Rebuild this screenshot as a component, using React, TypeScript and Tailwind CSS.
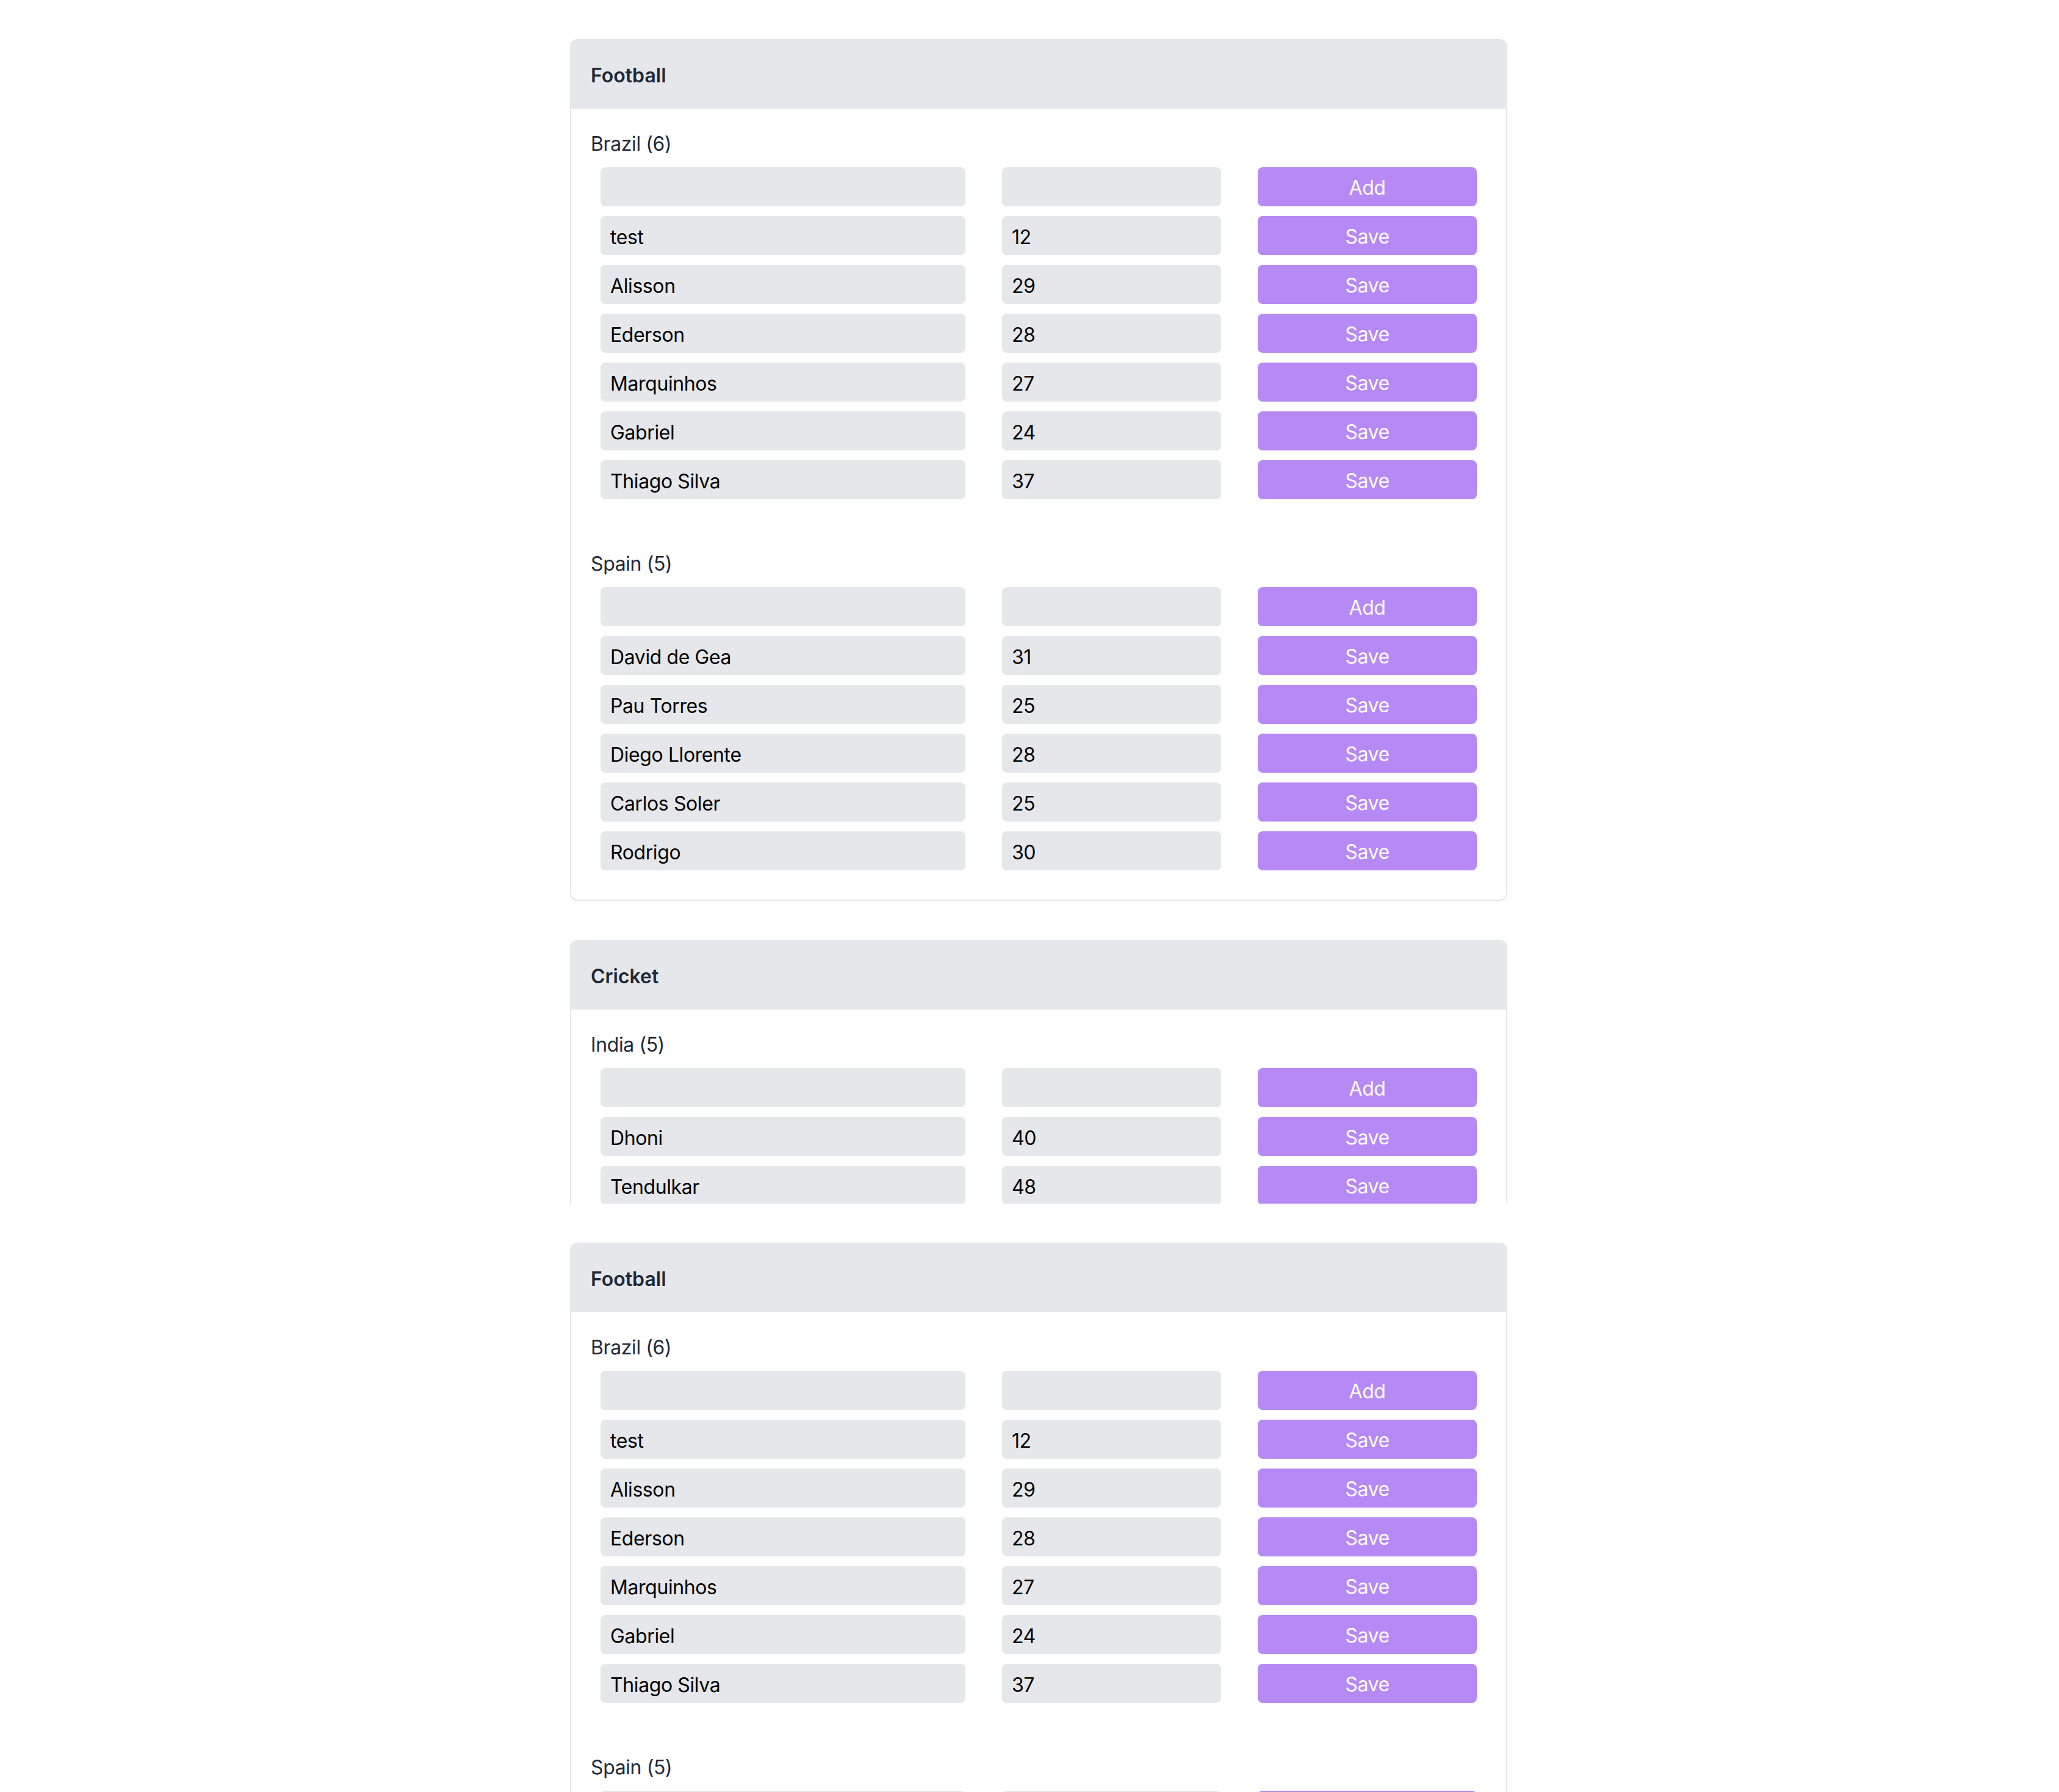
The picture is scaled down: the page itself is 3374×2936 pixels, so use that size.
import React from "react";

type Player = { name: string; age: number };
type Group = { country: string; count: number; players: Player[] };
type Sport = { sport: string; groups: Group[] };

const football: Sport = {
  sport: "Football",
  groups: [
    {
      country: "Brazil",
      count: 6,
      players: [
        { name: "test", age: 12 },
        { name: "Alisson", age: 29 },
        { name: "Ederson", age: 28 },
        { name: "Marquinhos", age: 27 },
        { name: "Gabriel", age: 24 },
        { name: "Thiago Silva", age: 37 },
      ],
    },
    {
      country: "Spain",
      count: 5,
      players: [
        { name: "David de Gea", age: 31 },
        { name: "Pau Torres", age: 25 },
        { name: "Diego Llorente", age: 28 },
        { name: "Carlos Soler", age: 25 },
        { name: "Rodrigo", age: 30 },
      ],
    },
  ],
};

const cricket: Sport = {
  sport: "Cricket",
  groups: [
    {
      country: "India",
      count: 5,
      players: [
        { name: "Dhoni", age: 40 },
        { name: "Tendulkar", age: 48 },
      ],
    },
  ],
};

function Row({ name, age, label }: { name: string; age: string; label: string }) {
  return (
    <div className="flex gap-[60px]">
      <input
        readOnly
        value={name}
        className="w-[598px] h-[64px] rounded-[8px] bg-[#e5e7eb] px-[16px] pt-[4px] text-[32px] tracking-[-0.4px] text-black outline-none"
      />
      <input
        readOnly
        value={age}
        className="w-[359px] h-[64px] rounded-[8px] bg-[#e5e7eb] px-[16px] pt-[4px] text-[32px] tracking-[-0.4px] text-black outline-none"
      />
      <button className="w-[359px] h-[64px] rounded-[8px] bg-[#b789f4] pt-[4px] text-white text-[32px] leading-[48px] tracking-[-0.4px]">
        {label}
      </button>
    </div>
  );
}

function Card({ data }: { data: Sport }) {
  return (
    <div className="w-[1536px] rounded-[12px] border-2 border-[#e5e7eb] overflow-hidden bg-white">
      <div className="bg-[#e5e7eb] px-[32px] pt-[34px] pb-[30px] text-[32px] leading-[48px] font-semibold text-[#1f2937]">
        {data.sport}
      </div>
      <div className="p-[32px] flex flex-col gap-[64px]">
        {data.groups.map((g) => (
          <div key={g.country}>
            <div className="pt-[2px] mb-[14px] text-[32px] leading-[48px] tracking-[-0.4px] text-[#1f2937]">
              {g.country} ({g.count})
            </div>
            <div className="flex flex-col gap-[16px] px-[16px] pb-[16px]">
              <Row name="" age="" label="Add" />
              {g.players.map((p) => (
                <Row key={p.name} name={p.name} age={String(p.age)} label="Save" />
              ))}
            </div>
          </div>
        ))}
      </div>
    </div>
  );
}

export default function App() {
  return (
    <div className="h-[2936px] overflow-hidden bg-white font-['Inter','Noto_Sans',sans-serif]">
      <div className="pt-[64px] pl-[934px] flex flex-col gap-[64px]">
        <Card data={football} />
        <div className="h-[432px] overflow-hidden">
          <Card data={cricket} />
        </div>
        <Card data={football} />
      </div>
    </div>
  );
}
